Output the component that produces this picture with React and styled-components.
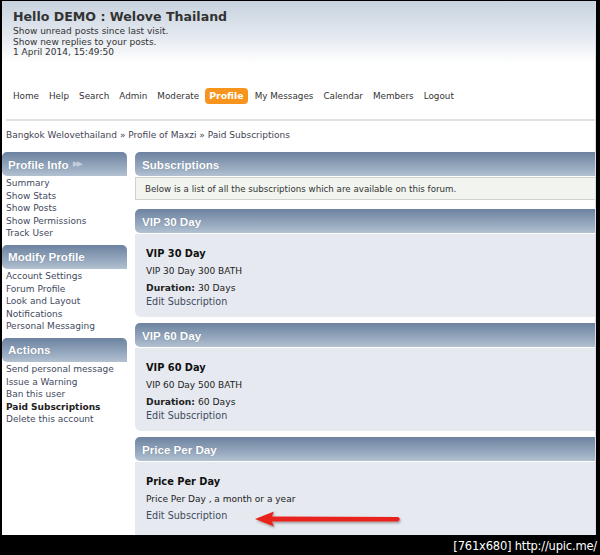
import React from "react";
import styled, { createGlobalStyle } from "styled-components";

const Global = createGlobalStyle`
  html, body { margin: 0; padding: 0; background: #000; }
  body { font-family: "DejaVu Sans", Verdana, sans-serif; }
  * { box-sizing: border-box; }
`;

const Frame = styled.div`
  width: 600px;
  height: 555px;
  display: flex;
  flex-direction: column;
  background: #000;
  overflow: hidden;
`;

const Page = styled.div`
  margin: 1px 4px 0 2px;
  height: 534px;
  background: #fff;
  overflow: hidden;
  position: relative;
  border-right: 1px solid #d8dde4;
`;

const Header = styled.div`
  background: linear-gradient(#c7d2de 0px, #e4e9f0 35px, #ffffff 62px);
  padding: 7px 11px 0;
  height: 77px;
`;

const Title = styled.div`
  font-weight: bold;
  font-size: 12.6px;
  color: #333;
  line-height: 18px;
`;

const InfoLine = styled.div`
  font-size: 9px;
  color: #333;
  line-height: 10.5px;
`;

const Nav = styled.nav`
  display: flex;
  align-items: center;
  padding-left: 7px;
  height: 36px;
`;

const NavItem = styled.span`
  font-size: 8.8px;
  color: #333;
  padding: 2px 4px;
  margin-right: ${(p) => (p.active ? "3px" : "2px")};
  border-radius: 4px;
  line-height: 11px;
  ${(p) =>
    p.active &&
    `background: #f7941d; color: #fff; font-weight: bold; font-size: 9.4px; padding: 2px 4px 3px;`}
`;

const Divider = styled.div`
  margin: 5px 0 0 4px;
  height: 2px;
  background: #e2e2e2;
`;

const Breadcrumb = styled.div`
  font-size: 9px;
  color: #445;
  padding: 8.5px 4px 0;
  height: 31px;
  line-height: 11px;
`;

const Columns = styled.div`
  display: grid;
  grid-template-columns: 125px 1fr;
  gap: 8px;
`;

const Side = styled.div`
  display: flex;
  flex-direction: column;
`;

const BarHead = styled.div`
  height: 24px;
  display: flex;
  align-items: center;
  padding-left: ${(p) => (p.side ? "6px" : "7px")};
  background: linear-gradient(#6c829f, #9badc2 70%, #b3c1d1);
  border-radius: 5px 5px 0 5px;
  font-family: "Liberation Sans", Arial, sans-serif;
  font-weight: bold;
  font-size: 11.6px;
  color: #fff;
  text-shadow: 0 0 1px rgba(40, 55, 80, 0.4);
  margin-right: ${(p) => (p.side ? "0" : "-8px")};
`;

const Arrows = styled.span`
  margin-left: 4px;
  font-size: 7px;
  color: #c3cdd9;
  letter-spacing: -1px;
  text-shadow: none;
`;

const LinkList = styled.div`
  padding: 1px 4px 5px;
  display: flex;
  flex-direction: column;
`;

const SideLink = styled.span`
  font-size: 9px;
  line-height: 12.6px;
  color: #3f4a5e;
  font-weight: ${(p) => (p.bold ? "bold" : "normal")};
  ${(p) => p.bold && "color: #222;"}
`;

const Main = styled.div`
  display: flex;
  flex-direction: column;
`;

const Desc = styled.div`
  height: 23px;
  margin: 1px -8px 9px 0;
  border: 1px solid #cfd3cc;
  background: #f1f4ef;
  display: flex;
  align-items: center;
  padding-left: 9px;
  font-size: 8.7px;
  color: #333;
`;

const Panel = styled.div`
  position: relative;
  background: #e6e9ef;
  border-radius: 0 0 0 6px;
  margin: 1px -8px 6px 0;
  padding: 13px 11px 8px;
  height: ${(p) => p.h}px;
`;

const SubTitle = styled.div`
  font-weight: bold;
  font-size: 9.8px;
  color: #111;
  line-height: 14px;
`;

const SubDesc = styled.div`
  font-size: 9px;
  color: #222;
  line-height: 14px;
  margin-top: 3px;
`;

const Details = styled.div`
  margin-top: 3px;
  font-size: 9.2px;
  line-height: 14px;
  color: #222;
`;

const Edit = styled.div`
  font-size: 9.6px;
  color: #3f4a5e;
  line-height: 14px;
`;

const ArrowMark = styled.svg`
  position: absolute;
  left: 118px;
  top: 47px;
`;

const Footer = styled.div`
  height: 20px;
  display: flex;
  align-items: center;
  justify-content: flex-end;
  padding-right: 3px;
  color: #fff;
  font-family: "DejaVu Sans Condensed", "DejaVu Sans", sans-serif;
  font-size: 12.8px;
  letter-spacing: -0.2px;
`;

const navItems = ["Home", "Help", "Search", "Admin", "Moderate", "Profile", "My Messages", "Calendar", "Members", "Logout"];

const sideGroups = [
  { title: "Profile Info", arrows: true, links: ["Summary", "Show Stats", "Show Posts", "Show Permissions", "Track User"] },
  { title: "Modify Profile", links: ["Account Settings", "Forum Profile", "Look and Layout", "Notifications", "Personal Messaging"] },
  { title: "Actions", links: ["Send personal message", "Issue a Warning", "Ban this user", "Paid Subscriptions", "Delete this account"] },
];

const subs = [
  { name: "VIP 30 Day", desc: "VIP 30 Day 300 BATH", duration: "30 Days", h: 83 },
  { name: "VIP 60 Day", desc: "VIP 60 Day 500 BATH", duration: "60 Days", h: 83 },
  { name: "Price Per Day", desc: "Price Per Day , a month or a year", h: 80, arrow: true },
];

export default function App() {
  return (
    <>
      <Global />
      <Frame>
        <Page>
          <Header>
            <Title>Hello DEMO : Welove Thailand</Title>
            <InfoLine>Show unread posts since last visit.</InfoLine>
            <InfoLine>Show new replies to your posts.</InfoLine>
            <InfoLine>1 April 2014, 15:49:50</InfoLine>
          </Header>
          <Nav>
            {navItems.map((n) => (
              <NavItem key={n} active={n === "Profile"}>{n}</NavItem>
            ))}
          </Nav>
          <Divider />
          <Breadcrumb>Bangkok Welovethailand » Profile of Maxzi » Paid Subscriptions</Breadcrumb>
          <Columns>
            <Side>
              {sideGroups.map((g) => (
                <React.Fragment key={g.title}>
                  <BarHead side>
                    {g.title}
                    {g.arrows && <Arrows>▶▶</Arrows>}
                  </BarHead>
                  <LinkList>
                    {g.links.map((l) => (
                      <SideLink key={l} bold={l === "Paid Subscriptions"}>{l}</SideLink>
                    ))}
                  </LinkList>
                </React.Fragment>
              ))}
            </Side>
            <Main>
              <BarHead>Subscriptions</BarHead>
              <Desc>Below is a list of all the subscriptions which are available on this forum.</Desc>
              {subs.map((s) => (
                <React.Fragment key={s.name}>
                  <BarHead>{s.name}</BarHead>
                  <Panel h={s.h}>
                    <SubTitle>{s.name}</SubTitle>
                    <SubDesc>{s.desc}</SubDesc>
                    <Details>
                      {s.duration && (
                        <div>
                          <b>Duration:</b> {s.duration}
                        </div>
                      )}
                      <Edit>Edit Subscription</Edit>
                    </Details>
                    {s.arrow && (
                      <ArrowMark width="152" height="22" viewBox="0 0 152 22">
                        <defs>
                          <filter id="sh" x="-10%" y="-50%" width="120%" height="200%">
                            <feDropShadow dx="1" dy="1.5" stdDeviation="1" floodColor="#000" floodOpacity="0.35" />
                          </filter>
                        </defs>
                        <g filter="url(#sh)">
                          <path d="M2 10 L21 2.5 L19 7.6 L145 8 Q148.5 10 145 12.4 L19 12.6 L21 17.5 Z" fill="#e8221d" />
                        </g>
                      </ArrowMark>
                    )}
                  </Panel>
                </React.Fragment>
              ))}
            </Main>
          </Columns>
        </Page>
        <Footer>[761x680] http://upic.me/</Footer>
      </Frame>
    </>
  );
}
